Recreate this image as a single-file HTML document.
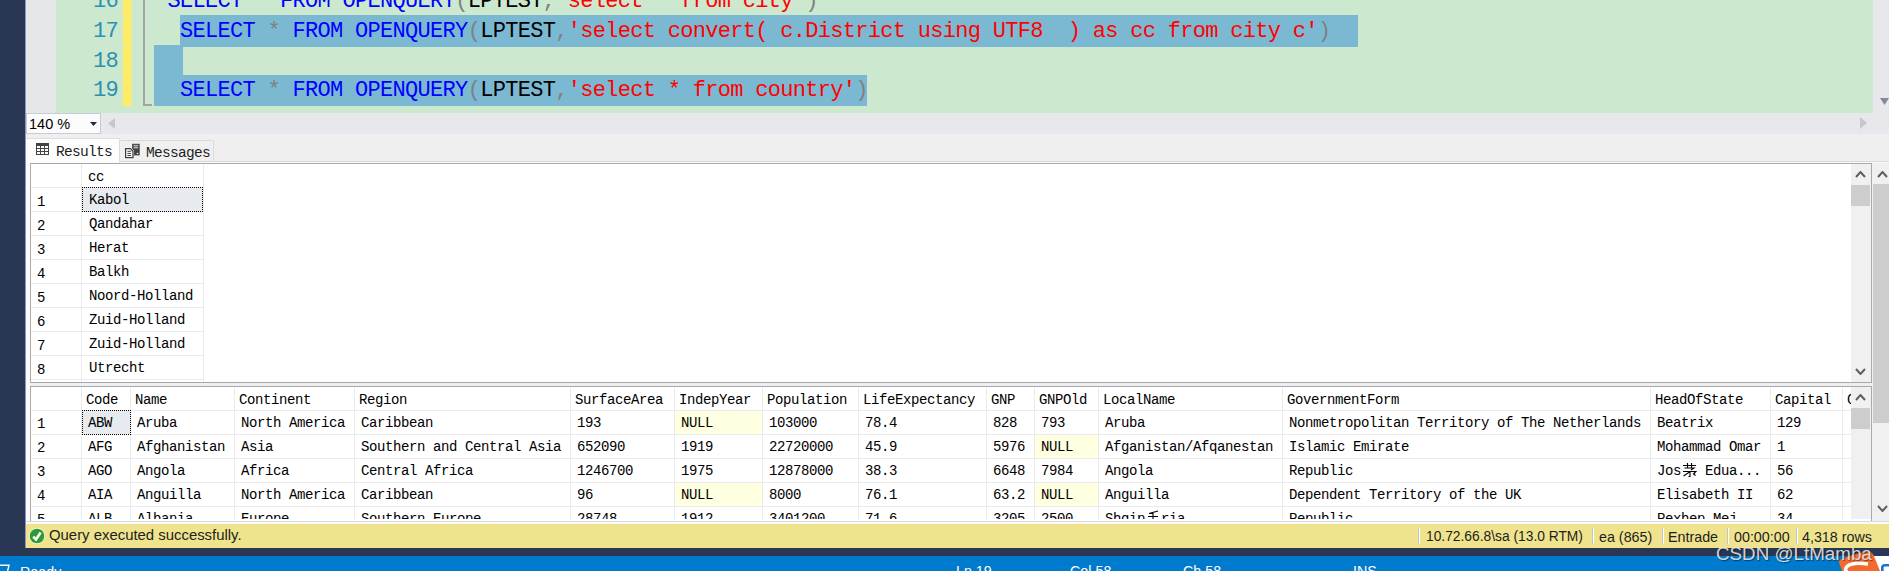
<!DOCTYPE html>
<html><head><meta charset="utf-8">
<style>
*{margin:0;padding:0;box-sizing:border-box}
html,body{width:1889px;height:571px;overflow:hidden;background:#293755;position:relative;font-family:"Liberation Sans",sans-serif}
.a{position:absolute}
.code{position:absolute;font-family:"Liberation Mono",monospace;font-size:22px;letter-spacing:-0.7px;line-height:30px;white-space:pre}
.k{color:#0000ff}.g{color:#808080}.s{color:#ff0000}.b{color:#000}
.ln{position:absolute;font-family:"Liberation Mono",monospace;font-size:22px;letter-spacing:-0.7px;line-height:30px;color:#2b91af;text-align:right;width:60px;left:58px}
.grid{position:absolute;background:#fff;border:1px solid #a7a9ae;overflow:hidden}
.hl{position:absolute;height:1px;background:#ececec}
.vl{position:absolute;width:1px;background:#ececec}
.t{position:absolute;font-family:"Liberation Mono",monospace;font-size:14px;letter-spacing:-0.4px;line-height:24px;white-space:pre;color:#000}
.st{position:absolute;font-family:"Liberation Sans",sans-serif;font-size:14.3px;line-height:26px;white-space:pre;color:#1e1e1e}
.sep{position:absolute;width:2px;top:528px;height:16px;border-left:1px solid #c5c5cc;background:#fff}
.chev{position:absolute}
</style></head><body>
<!-- left light strip -->
<div class="a" style="left:25px;top:0;width:1px;height:548px;background:#8a99c4"></div>
<!-- editor -->
<div class="a" style="left:26px;top:0;width:30px;height:113px;background:#e6e7e8"></div>
<div class="a" style="left:56px;top:0;width:1817px;height:113px;background:#cce8cf"></div>
<div class="a" style="left:1873px;top:0;width:16px;height:134px;background:#e8e8ec"></div>
<svg class="a" style="left:1880px;top:98px" width="9" height="8"><path d="M0 0H9L4.5 7Z" fill="#868999"/></svg>
<!-- yellow change bar -->
<div class="a" style="left:123px;top:0;width:8px;height:106px;background:#feec64"></div>
<div class="a" style="left:131px;top:0;width:1px;height:106px;background:#e6eaa0"></div>
<div class="a" style="left:123px;top:16px;width:9px;height:1px;background:#f0ea98"></div>
<div class="a" style="left:123px;top:46px;width:9px;height:1px;background:#f0ea98"></div>
<!-- outline line -->
<div class="a" style="left:143px;top:0;width:2px;height:106px;background:#a5a5a5"></div>
<div class="a" style="left:143px;top:104px;width:9px;height:2px;background:#a5a5a5"></div>
<!-- selection -->
<div class="a" style="left:180px;top:15px;width:1178px;height:32px;background:#7bb9d3"></div>
<div class="a" style="left:154px;top:45px;width:29px;height:61px;background:#7bb9d3"></div>
<div class="a" style="left:154px;top:75px;width:713px;height:31px;background:#7bb9d3"></div>
<!-- line numbers -->
<div class="ln" style="top:-13.5px">16</div>
<div class="ln" style="top:17px">17</div>
<div class="ln" style="top:46.5px">18</div>
<div class="ln" style="top:76px">19</div>
<!-- code -->
<div class="code" style="left:167.5px;top:-13.5px"><span class="k">SELECT</span> <span class="g">*</span> <span class="k">FROM</span> <span class="k">OPENQUERY</span><span class="g">(</span><span class="b">LPTEST</span><span class="g">,</span><span class="s">'select * from city'</span><span class="g">)</span></div>
<div class="code" style="left:180px;top:17px"><span class="k">SELECT</span> <span class="g">*</span> <span class="k">FROM</span> <span class="k">OPENQUERY</span><span class="g">(</span><span class="b">LPTEST</span><span class="g">,</span><span class="s">'select convert( c.District using UTF8  ) as cc from city c'</span><span class="g">)</span></div>
<div class="code" style="left:180px;top:76px"><span class="k">SELECT</span> <span class="g">*</span> <span class="k">FROM</span> <span class="k">OPENQUERY</span><span class="g">(</span><span class="b">LPTEST</span><span class="g">,</span><span class="s">'select * from country'</span><span class="g">)</span></div>

<!-- zoom / h-scroll row -->
<div class="a" style="left:26px;top:113px;width:1847px;height:21px;background:#e8e8ec"></div>
<div class="a" style="left:26px;top:113px;width:75px;height:21px;background:#fcfcfc;border:1px solid #c3cbdd"></div>
<div class="st" style="left:29px;top:113px;font-size:14.5px;line-height:22px;color:#000">140 %</div>
<svg class="a" style="left:90px;top:122px" width="7" height="4"><path d="M0 0H7L3.5 4Z" fill="#1e2a3c"/></svg>
<svg class="a" style="left:108px;top:118px" width="7" height="11"><path d="M7 0V11L0 5.5Z" fill="#c6c6cf"/></svg>
<svg class="a" style="left:1860px;top:117px" width="7" height="12"><path d="M0 0V12L7 6Z" fill="#c6c6cf"/></svg>

<!-- tabs strip -->
<div class="a" style="left:26px;top:134px;width:1863px;height:29px;background:#efefef"></div>
<div class="a" style="left:26px;top:161px;width:1863px;height:1px;background:#d9d9d9"></div>
<div class="a" style="left:26px;top:162px;width:1863px;height:1px;background:#fbfbfb"></div>
<div class="a" style="left:26px;top:138px;width:94px;height:25px;background:#fdfdfd;border-top:1px solid #dedede;border-right:1px solid #e4e4e4"></div>
<div class="a" style="left:119px;top:140px;width:95px;height:21px;background:#f0f0f0;border:1px solid #dadada;border-bottom:none"></div>
<!-- results icon -->
<svg class="a" style="left:36px;top:143px" width="13" height="12" shape-rendering="crispEdges"><rect x="0" y="0" width="13" height="12" fill="#424242"/><rect x="1" y="3" width="3" height="2" fill="#fdfdfd"/><rect x="5" y="3" width="3" height="2" fill="#fdfdfd"/><rect x="9" y="3" width="3" height="2" fill="#fdfdfd"/><rect x="1" y="6" width="3" height="2" fill="#fdfdfd"/><rect x="5" y="6" width="3" height="2" fill="#fdfdfd"/><rect x="9" y="6" width="3" height="2" fill="#fdfdfd"/><rect x="1" y="9" width="3" height="2" fill="#fdfdfd"/><rect x="5" y="9" width="3" height="2" fill="#fdfdfd"/><rect x="9" y="9" width="3" height="2" fill="#fdfdfd"/></svg>
<div class="t" style="left:56px;top:140px;font-size:14.5px;letter-spacing:-0.7px;color:#1e1e1e">Results</div>
<!-- messages icon -->
<svg class="a" style="left:124px;top:143px" width="17" height="17"><rect x="8.6" y="1.2" width="6.6" height="10.8" fill="#424242" stroke="#424242" stroke-width="0.8"/><path d="M9.6 2.8H14.2M9.6 4.8H14.2" stroke="#fff" stroke-width="0.9"/><circle cx="13.5" cy="10.4" r="0.75" fill="#fff"/><path d="M1.6 5.6H6.4L9 8.2V14.6H1.6Z" fill="#fff" stroke="#fff" stroke-width="2.2"/><path d="M1.6 5.6H6.4L9 8.2V14.6H1.6Z" fill="#fff" stroke="#3c3c3c" stroke-width="1.3"/><path d="M3.4 8.3H7M3.4 10.4H7M3.4 12.5H7" stroke="#3c3c3c" stroke-width="1"/></svg>
<div class="t" style="left:146px;top:141px;font-size:14.5px;letter-spacing:-0.7px;color:#1e1e1e">Messages</div>

<!-- background under grids -->
<div class="a" style="left:26px;top:163px;width:1863px;height:361px;background:#fbfbfb"></div>
<div class="a" style="left:30px;top:383px;width:1843px;height:3px;background:#efefef"></div>

<!-- upper grid -->
<div class="grid" style="left:30px;top:163px;width:1842px;height:220px">
</div>
<!-- lower grid -->
<div class="grid" style="left:30px;top:386px;width:1842px;height:136px;border-bottom:none">
</div>
<!--GRID-->
<div class="a" style="left:0;top:0;width:1889px;height:382px;overflow:hidden">
<div class="a" style="left:82px;top:188px;width:121px;height:23px;background:#e7ebf0"></div>
<div class="a" style="left:31px;top:187px;width:172px;height:1px;background:#ebebeb"></div>
<div class="a" style="left:31px;top:211px;width:172px;height:1px;background:#ebebeb"></div>
<div class="a" style="left:31px;top:235px;width:172px;height:1px;background:#ebebeb"></div>
<div class="a" style="left:31px;top:259px;width:172px;height:1px;background:#ebebeb"></div>
<div class="a" style="left:31px;top:283px;width:172px;height:1px;background:#ebebeb"></div>
<div class="a" style="left:31px;top:307px;width:172px;height:1px;background:#ebebeb"></div>
<div class="a" style="left:31px;top:331px;width:172px;height:1px;background:#ebebeb"></div>
<div class="a" style="left:31px;top:355px;width:172px;height:1px;background:#ebebeb"></div>
<div class="a" style="left:31px;top:379px;width:172px;height:1px;background:#ebebeb"></div>
<div class="a" style="left:81px;top:164px;width:1px;height:218px;background:#ebebeb"></div>
<div class="a" style="left:203px;top:164px;width:1px;height:218px;background:#ebebeb"></div>
<div class="a" style="left:82px;top:187px;width:121px;height:25px;border:1px dotted #000"></div>
<div class="t" style="left:88px;top:164.98px">cc</div>
<div class="t" style="left:37px;top:190.28px">1</div>
<div class="t" style="left:89px;top:188.28px">Kabol</div>
<div class="t" style="left:37px;top:214.28px">2</div>
<div class="t" style="left:89px;top:212.28px">Qandahar</div>
<div class="t" style="left:37px;top:238.28px">3</div>
<div class="t" style="left:89px;top:236.28px">Herat</div>
<div class="t" style="left:37px;top:262.28px">4</div>
<div class="t" style="left:89px;top:260.28px">Balkh</div>
<div class="t" style="left:37px;top:286.28px">5</div>
<div class="t" style="left:89px;top:284.28px">Noord-Holland</div>
<div class="t" style="left:37px;top:310.28px">6</div>
<div class="t" style="left:89px;top:308.28px">Zuid-Holland</div>
<div class="t" style="left:37px;top:334.28px">7</div>
<div class="t" style="left:89px;top:332.28px">Zuid-Holland</div>
<div class="t" style="left:37px;top:358.28px">8</div>
<div class="t" style="left:89px;top:356.28px">Utrecht</div>
<div class="a" style="left:1851px;top:164px;width:20px;height:218px;background:#f0f0f0"></div>
<div class="a" style="left:1851px;top:185px;width:19px;height:21px;background:#cdcdcd"></div>
<svg class="a" style="left:1855.0px;top:171.0px" width="11" height="7"><path d="M1 6L5.5 1L10 6" fill="none" stroke="#5f5f5f" stroke-width="2"/></svg>
<svg class="a" style="left:1855.0px;top:367.5px" width="11" height="7"><path d="M1 1L5.5 6L10 1" fill="none" stroke="#5f5f5f" stroke-width="2"/></svg>
</div><div class="a" style="left:0;top:0;width:1889px;height:519px;overflow:hidden">
<div class="a" style="left:675px;top:411px;width:87px;height:23px;background:#ffffe1"></div>
<div class="a" style="left:1035px;top:435px;width:63px;height:23px;background:#ffffe1"></div>
<div class="a" style="left:675px;top:483px;width:87px;height:23px;background:#ffffe1"></div>
<div class="a" style="left:1035px;top:483px;width:63px;height:23px;background:#ffffe1"></div>
<div class="a" style="left:82px;top:411px;width:48px;height:23px;background:#e7ebf0"></div>
<div class="a" style="left:31px;top:410px;width:1820px;height:1px;background:#ebebeb"></div>
<div class="a" style="left:31px;top:434px;width:1820px;height:1px;background:#ebebeb"></div>
<div class="a" style="left:31px;top:458px;width:1820px;height:1px;background:#ebebeb"></div>
<div class="a" style="left:31px;top:482px;width:1820px;height:1px;background:#ebebeb"></div>
<div class="a" style="left:31px;top:506px;width:1820px;height:1px;background:#ebebeb"></div>
<div class="a" style="left:81px;top:387px;width:1px;height:132px;background:#ebebeb"></div>
<div class="a" style="left:130px;top:387px;width:1px;height:132px;background:#ebebeb"></div>
<div class="a" style="left:234px;top:387px;width:1px;height:132px;background:#ebebeb"></div>
<div class="a" style="left:354px;top:387px;width:1px;height:132px;background:#ebebeb"></div>
<div class="a" style="left:570px;top:387px;width:1px;height:132px;background:#ebebeb"></div>
<div class="a" style="left:674px;top:387px;width:1px;height:132px;background:#ebebeb"></div>
<div class="a" style="left:762px;top:387px;width:1px;height:132px;background:#ebebeb"></div>
<div class="a" style="left:858px;top:387px;width:1px;height:132px;background:#ebebeb"></div>
<div class="a" style="left:986px;top:387px;width:1px;height:132px;background:#ebebeb"></div>
<div class="a" style="left:1034px;top:387px;width:1px;height:132px;background:#ebebeb"></div>
<div class="a" style="left:1098px;top:387px;width:1px;height:132px;background:#ebebeb"></div>
<div class="a" style="left:1282px;top:387px;width:1px;height:132px;background:#ebebeb"></div>
<div class="a" style="left:1650px;top:387px;width:1px;height:132px;background:#ebebeb"></div>
<div class="a" style="left:1770px;top:387px;width:1px;height:132px;background:#ebebeb"></div>
<div class="a" style="left:1842px;top:387px;width:1px;height:132px;background:#ebebeb"></div>
<div class="a" style="left:82px;top:410px;width:49px;height:25px;border:1px dotted #000"></div>
<div class="t" style="left:86px;top:388.18px">Code</div>
<div class="t" style="left:135px;top:388.18px">Name</div>
<div class="t" style="left:239px;top:388.18px">Continent</div>
<div class="t" style="left:359px;top:388.18px">Region</div>
<div class="t" style="left:575px;top:388.18px">SurfaceArea</div>
<div class="t" style="left:679px;top:388.18px">IndepYear</div>
<div class="t" style="left:767px;top:388.18px">Population</div>
<div class="t" style="left:863px;top:388.18px">LifeExpectancy</div>
<div class="t" style="left:991px;top:388.18px">GNP</div>
<div class="t" style="left:1039px;top:388.18px">GNPOld</div>
<div class="t" style="left:1103px;top:388.18px">LocalName</div>
<div class="t" style="left:1287px;top:388.18px">GovernmentForm</div>
<div class="t" style="left:1655px;top:388.18px">HeadOfState</div>
<div class="t" style="left:1775px;top:388.18px">Capital</div>
<div class="a" style="left:1843px;top:387px;width:8px;height:23px;overflow:hidden">
<div class="t" style="left:4px;top:1.18px">Code2</div></div>
<div class="t" style="left:37px;top:412.48px">1</div>
<div class="t" style="left:88px;top:410.98px">ABW</div>
<div class="t" style="left:137px;top:410.98px">Aruba</div>
<div class="t" style="left:241px;top:410.98px">North America</div>
<div class="t" style="left:361px;top:410.98px">Caribbean</div>
<div class="t" style="left:577px;top:410.98px">193</div>
<div class="t" style="left:681px;top:410.98px">NULL</div>
<div class="t" style="left:769px;top:410.98px">103000</div>
<div class="t" style="left:865px;top:410.98px">78.4</div>
<div class="t" style="left:993px;top:410.98px">828</div>
<div class="t" style="left:1041px;top:410.98px">793</div>
<div class="t" style="left:1105px;top:410.98px">Aruba</div>
<div class="t" style="left:1289px;top:410.98px">Nonmetropolitan Territory of The Netherlands</div>
<div class="t" style="left:1657px;top:410.98px">Beatrix</div>
<div class="t" style="left:1777px;top:410.98px">129</div>
<div class="t" style="left:37px;top:436.48px">2</div>
<div class="t" style="left:88px;top:434.98px">AFG</div>
<div class="t" style="left:137px;top:434.98px">Afghanistan</div>
<div class="t" style="left:241px;top:434.98px">Asia</div>
<div class="t" style="left:361px;top:434.98px">Southern and Central Asia</div>
<div class="t" style="left:577px;top:434.98px">652090</div>
<div class="t" style="left:681px;top:434.98px">1919</div>
<div class="t" style="left:769px;top:434.98px">22720000</div>
<div class="t" style="left:865px;top:434.98px">45.9</div>
<div class="t" style="left:993px;top:434.98px">5976</div>
<div class="t" style="left:1041px;top:434.98px">NULL</div>
<div class="t" style="left:1105px;top:434.98px">Afganistan/Afqanestan</div>
<div class="t" style="left:1289px;top:434.98px">Islamic Emirate</div>
<div class="t" style="left:1657px;top:434.98px">Mohammad Omar</div>
<div class="t" style="left:1777px;top:434.98px">1</div>
<div class="t" style="left:37px;top:460.48px">3</div>
<div class="t" style="left:88px;top:458.98px">AGO</div>
<div class="t" style="left:137px;top:458.98px">Angola</div>
<div class="t" style="left:241px;top:458.98px">Africa</div>
<div class="t" style="left:361px;top:458.98px">Central Africa</div>
<div class="t" style="left:577px;top:458.98px">1246700</div>
<div class="t" style="left:681px;top:458.98px">1975</div>
<div class="t" style="left:769px;top:458.98px">12878000</div>
<div class="t" style="left:865px;top:458.98px">38.3</div>
<div class="t" style="left:993px;top:458.98px">6648</div>
<div class="t" style="left:1041px;top:458.98px">7984</div>
<div class="t" style="left:1105px;top:458.98px">Angola</div>
<div class="t" style="left:1289px;top:458.98px">Republic</div>
<svg class="a" style="left:1681px;top:460.7px" width="16" height="17"><path d="M2 4.5H15M6.5 2V6.5M10.5 2V6.5M3.5 7H13L10 9M2 10.5H15L13 12.5M9 10.5V15.5H7.5M8.5 11L2.5 15M12 12.5L14.5 14.5" fill="none" stroke="#000" stroke-width="1.1"/></svg>
<div class="t" style="left:1657px;top:458.98px">Jos   Edua...</div>
<div class="t" style="left:1777px;top:458.98px">56</div>
<div class="t" style="left:37px;top:484.48px">4</div>
<div class="t" style="left:88px;top:482.98px">AIA</div>
<div class="t" style="left:137px;top:482.98px">Anguilla</div>
<div class="t" style="left:241px;top:482.98px">North America</div>
<div class="t" style="left:361px;top:482.98px">Caribbean</div>
<div class="t" style="left:577px;top:482.98px">96</div>
<div class="t" style="left:681px;top:482.98px">NULL</div>
<div class="t" style="left:769px;top:482.98px">8000</div>
<div class="t" style="left:865px;top:482.98px">76.1</div>
<div class="t" style="left:993px;top:482.98px">63.2</div>
<div class="t" style="left:1041px;top:482.98px">NULL</div>
<div class="t" style="left:1105px;top:482.98px">Anguilla</div>
<div class="t" style="left:1289px;top:482.98px">Dependent Territory of the UK</div>
<div class="t" style="left:1657px;top:482.98px">Elisabeth II</div>
<div class="t" style="left:1777px;top:482.98px">62</div>
<div class="t" style="left:37px;top:508.48px">5</div>
<div class="t" style="left:88px;top:506.98px">ALB</div>
<div class="t" style="left:137px;top:506.98px">Albania</div>
<div class="t" style="left:241px;top:506.98px">Europe</div>
<div class="t" style="left:361px;top:506.98px">Southern Europe</div>
<div class="t" style="left:577px;top:506.98px">28748</div>
<div class="t" style="left:681px;top:506.98px">1912</div>
<div class="t" style="left:769px;top:506.98px">3401200</div>
<div class="t" style="left:865px;top:506.98px">71.6</div>
<div class="t" style="left:993px;top:506.98px">3205</div>
<div class="t" style="left:1041px;top:506.98px">2500</div>
<svg class="a" style="left:1145px;top:508.7px" width="16" height="17"><path d="M13 2L4 4.5M3 7.5H13M1.5 11H14.5M8 3.5V14Q8 15.5 10 15.5H14.5V13.5" fill="none" stroke="#000" stroke-width="1.1"/></svg>
<div class="t" style="left:1105px;top:506.98px">Shqip  ria</div>
<div class="t" style="left:1289px;top:506.98px">Republic</div>
<div class="t" style="left:1657px;top:506.98px">Rexhep Mej...</div>
<div class="t" style="left:1777px;top:506.98px">34</div>
<div class="a" style="left:1851px;top:387px;width:20px;height:132px;background:#f0f0f0"></div>
<div class="a" style="left:1851px;top:408px;width:19px;height:21px;background:#cdcdcd"></div>
<svg class="a" style="left:1855.0px;top:394.0px" width="11" height="7"><path d="M1 6L5.5 1L10 6" fill="none" stroke="#5f5f5f" stroke-width="2"/></svg>
</div>
<!--/GRID-->
<div class="a" style="left:26px;top:521px;width:1863px;height:1px;background:#d9d9d9"></div>

<!-- outer scrollbar -->
<div class="a" style="left:1872px;top:163px;width:17px;height:358px;background:#f0f0f0"></div>
<div class="a" style="left:1873px;top:184px;width:16px;height:239px;background:#cdcdcd"></div>
<svg class="a" style="left:1877px;top:170.5px" width="11" height="7"><path d="M1 6L5.5 1L10 6" fill="none" stroke="#5f5f5f" stroke-width="2"/></svg>
<svg class="a" style="left:1877px;top:505px" width="11" height="7"><path d="M1 1L5.5 6L10 1" fill="none" stroke="#5f5f5f" stroke-width="2"/></svg>

<!-- status yellow -->
<div class="a" style="left:26px;top:524px;width:1863px;height:24px;background:#efe48d"></div>
<svg class="a" style="left:28px;top:527px" width="18" height="18"><circle cx="9" cy="9" r="7.9" fill="#fdfbe8"/><circle cx="9" cy="9" r="7.3" fill="#2f9a35"/><path d="M5.2 9.6L8 12.4L12.6 5.6" fill="none" stroke="#fff" stroke-width="2.6"/></svg>
<div class="st" style="left:49px;top:521.5px;font-size:14.9px">Query executed successfully.</div>
<div class="sep" style="left:1418px"></div>
<div class="st" style="left:1426px;top:524px;font-size:13.8px">10.72.66.8\sa (13.0 RTM)</div>
<div class="sep" style="left:1592px"></div>
<div class="st" style="left:1599px;top:524px">ea (865)</div>
<div class="sep" style="left:1662px"></div>
<div class="st" style="left:1668px;top:524px">Entrade</div>
<div class="sep" style="left:1727px"></div>
<div class="st" style="left:1734px;top:524px">00:00:00</div>
<div class="sep" style="left:1796px"></div>
<div class="st" style="left:1802px;top:524px">4,318 rows</div>

<!-- bottom blue status bar -->
<div class="a" style="left:0;top:556px;width:1889px;height:15px;background:#007acc"></div>
<svg class="a" style="left:0;top:564px" width="12" height="7"><path d="M0 1.3H9L7.6 7" fill="none" stroke="#fff" stroke-width="1.4"/></svg>
<div class="st" style="left:20px;top:559px;color:#fff">Ready</div>
<div class="st" style="left:956px;top:558px;color:#fff">Ln 19</div>
<div class="st" style="left:1070px;top:558px;color:#fff">Col 58</div>
<div class="st" style="left:1183px;top:558px;color:#fff">Ch 58</div>
<div class="st" style="left:1353px;top:558px;color:#fff">INS</div>
<!-- csdn logo -->
<svg class="a" style="left:1830px;top:548px" width="59" height="23"><rect x="42.5" y="8" width="16.5" height="15" fill="#fff"/><path d="M8.5 13C14 9 30 4 39 4C41 4 42.5 5 43.5 7L50 23H12Z" fill="#f26a2e"/><path d="M38 16C31 15 21 15 17 18.5C14.5 21 15.5 23 17 24" fill="none" stroke="#fff" stroke-width="3.6"/><path d="M52.3 23V19.5Q52.3 17.3 55 17.3H59" fill="none" stroke="#1d72d6" stroke-width="2.6"/></svg>
<!-- watermark -->
<div class="st" style="left:1716px;top:541.5px;font-size:18.8px;line-height:24px;color:rgba(232,232,232,0.9);text-shadow:1px 1px 1px rgba(0,0,0,0.45)">CSDN @LtMamba</div>
</body></html>
